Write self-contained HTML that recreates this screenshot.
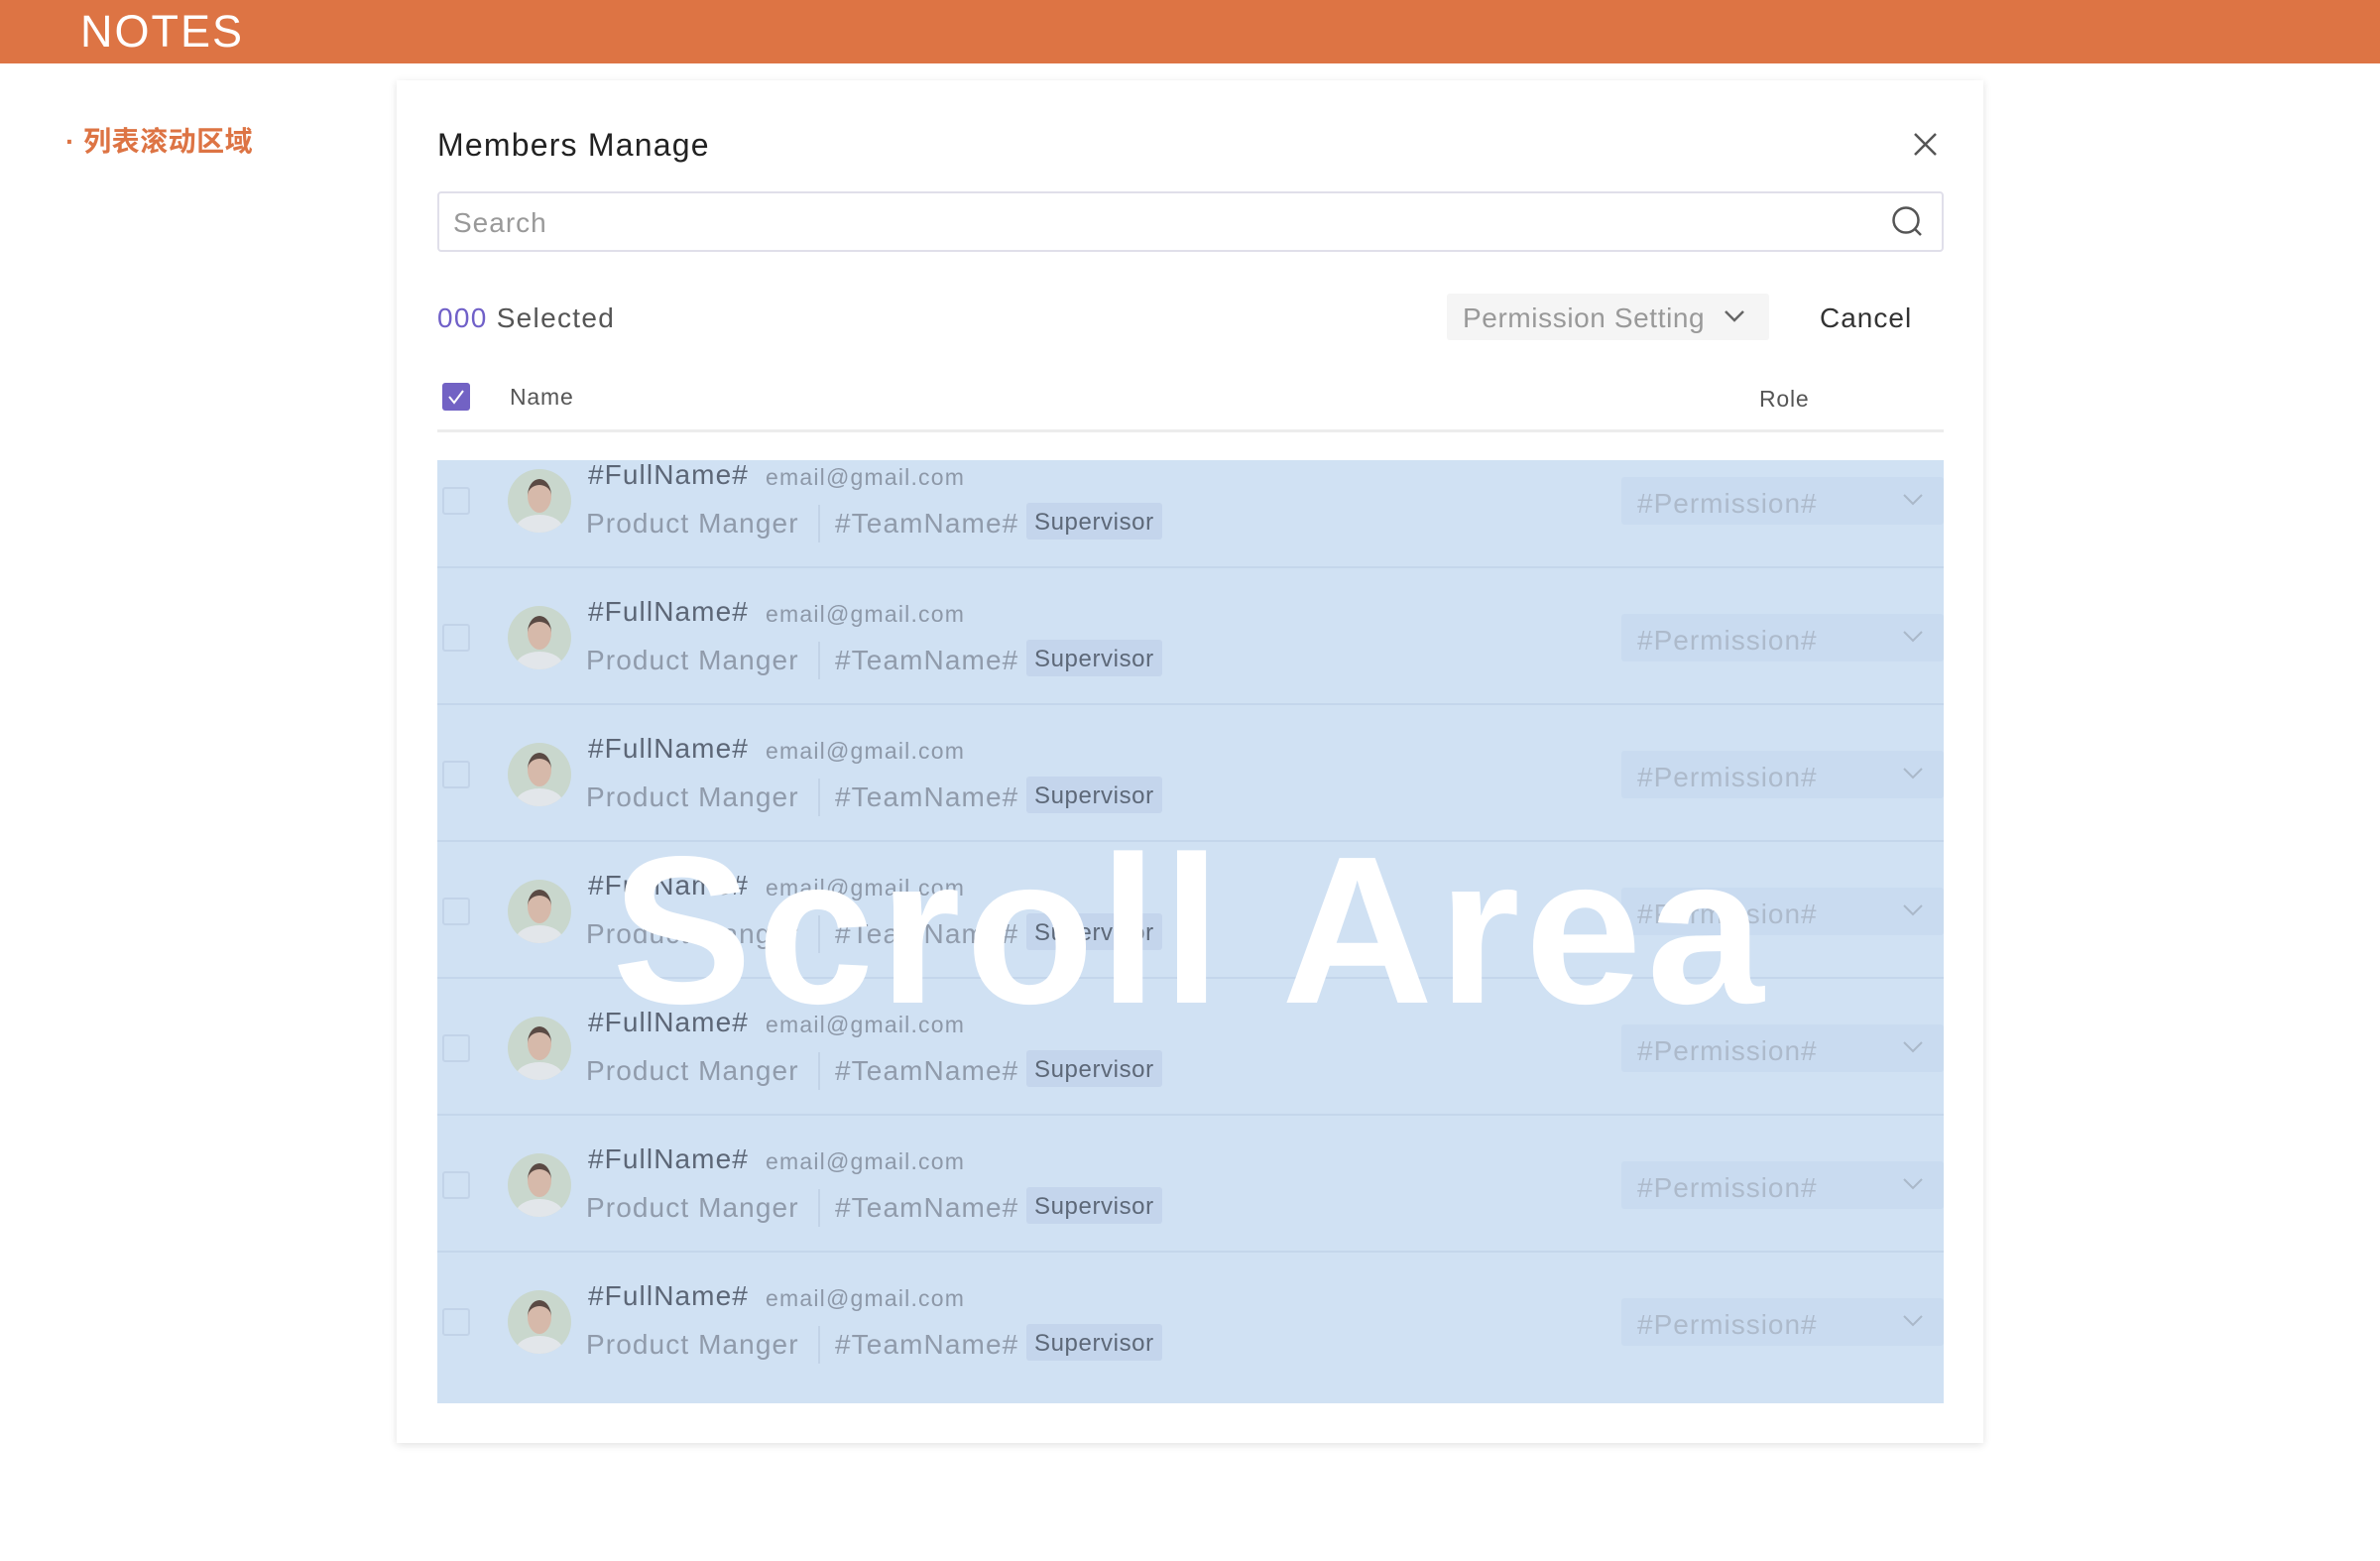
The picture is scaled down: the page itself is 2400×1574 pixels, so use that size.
<!DOCTYPE html>
<html><head><meta charset="utf-8"><style>
*{margin:0;padding:0;box-sizing:border-box}
body{width:2400px;height:1574px;position:relative;background:#fff;font-family:"Liberation Sans","Noto Sans CJK SC",sans-serif;overflow:hidden}
.a{position:absolute;white-space:nowrap}
.hdr{left:0;top:0;width:2400px;height:64px;background:#dd7444}
.modal{left:400px;top:81px;width:1600px;height:1374px;background:#fff;box-shadow:0 2px 8px rgba(0,0,0,0.12)}
.scroll{left:441px;top:464px;width:1519px;height:951px;background:#d0e1f3;overflow:hidden}
.row{position:absolute;left:0;width:1519px;height:138px;border-bottom:2px solid #c4d6eb}
.cb{position:absolute;left:5px;top:56px;width:28px;height:28px;border:2px solid #c2d3e8;border-radius:3px;background:#d0e1f3}
.av{position:absolute;left:71px;top:38px;width:64px;height:64px;border-radius:50%;background:#c9d7cd;overflow:hidden}
.fn{position:absolute;left:152px;top:28px;font-size:28px;color:#5c6676;letter-spacing:1.1px}
.em{position:absolute;left:331px;top:33px;font-size:23px;color:#8d98a8;letter-spacing:1.2px}
.pm{position:absolute;left:150px;top:77px;font-size:28px;color:#909bab;letter-spacing:1.1px}
.dv{position:absolute;left:384px;top:74px;width:2px;height:38px;background:#c2d3e7}
.tn{position:absolute;left:401px;top:77px;font-size:28px;color:#909bab;letter-spacing:1.1px}
.tag{position:absolute;left:594px;top:72px;width:137px;height:37px;background:#c4d5ec;border-radius:3px;font-size:24px;color:#5d6878;padding:6px 0 0 8px;letter-spacing:0.6px}
.sel{position:absolute;left:1194px;top:46px;width:325px;height:48px;background:#c9dbf0;border-radius:3px}
.sel span{position:absolute;left:16px;top:11px;font-size:28px;color:#adbacb;letter-spacing:1px}
.sel svg{position:absolute;left:283px;top:16px}
</style></head><body>
<div class="a hdr"></div>
<div class="a" style="left:81px;top:6px;font-size:45px;color:#fff;letter-spacing:2px">NOTES</div>
<div class="a" style="left:66px;top:121px;font-size:28px;color:#dd7444;font-weight:bold;letter-spacing:0.5px">· 列表滚动区域</div>
<div class="a modal"></div>
<div class="a" style="left:441px;top:128px;font-size:32px;color:#222;letter-spacing:1.2px">Members Manage</div>
<svg class="a" style="left:1930px;top:134px" width="23" height="23" viewBox="0 0 23 23"><path d="M1 1L22 22M22 1L1 22" stroke="#555" stroke-width="2.5"/></svg>
<div class="a" style="left:441px;top:193px;width:1519px;height:61px;border:2px solid #e0dfea;border-radius:4px"></div>
<div class="a" style="left:457px;top:209px;font-size:28px;color:#999;letter-spacing:1px">Search</div>
<svg class="a" style="left:1906px;top:207px" width="34" height="34" viewBox="0 0 34 34"><circle cx="16" cy="15" r="12.5" fill="none" stroke="#555" stroke-width="2.5"/><path d="M25 24L31 30" stroke="#555" stroke-width="2.5"/></svg>
<div class="a" style="left:441px;top:305px;font-size:28px;color:#555;letter-spacing:1.3px"><span style="color:#7060c8">000</span> Selected</div>
<div class="a" style="left:1459px;top:296px;width:325px;height:47px;background:#f5f5f5;border-radius:3px"></div>
<div class="a" style="left:1475px;top:305px;font-size:28px;color:#999;letter-spacing:0.6px">Permission Setting</div>
<svg class="a" style="left:1738px;top:312px" width="22" height="14" viewBox="0 0 22 14"><path d="M2 2L11 11L20 2" fill="none" stroke="#666" stroke-width="2.5"/></svg>
<div class="a" style="left:1835px;top:305px;font-size:28px;color:#333;letter-spacing:1px">Cancel</div>
<div class="a" style="left:446px;top:386px;width:28px;height:28px;background:#7262c4;border-radius:3px"></div>
<svg class="a" style="left:446px;top:386px" width="28" height="28" viewBox="0 0 28 28"><path d="M7 14L12 20L21 8" fill="none" stroke="#fff" stroke-width="2"/></svg>
<div class="a" style="left:514px;top:387px;font-size:23px;color:#555;letter-spacing:0.8px">Name</div>
<div class="a" style="left:1774px;top:389px;font-size:23px;color:#555;letter-spacing:0.8px">Role</div>
<div class="a" style="left:441px;top:433px;width:1519px;height:3px;background:#ececec"></div>
<div class="a scroll">
<div class="row" style="top:-29px"><div class="cb"></div><div class="av"><div style="position:absolute;left:20px;top:10px;width:24px;height:34px;border-radius:50%;background:#d6b9aa;border-top:6px solid #5a4a44"></div><div style="position:absolute;left:8px;top:46px;width:48px;height:30px;border-radius:50%;background:#e2e6ea"></div></div><div class="fn">#FullName#</div><div class="em">email@gmail.com</div><div class="pm">Product Manger</div><div class="dv"></div><div class="tn">#TeamName#</div><div class="tag">Supervisor</div><div class="sel"><span>#Permission#</span><svg width="22" height="14" viewBox="0 0 22 14"><path d="M2 2L11 11L20 2" fill="none" stroke="#aab8c9" stroke-width="2"/></svg></div></div>
<div class="row" style="top:109px"><div class="cb"></div><div class="av"><div style="position:absolute;left:20px;top:10px;width:24px;height:34px;border-radius:50%;background:#d6b9aa;border-top:6px solid #5a4a44"></div><div style="position:absolute;left:8px;top:46px;width:48px;height:30px;border-radius:50%;background:#e2e6ea"></div></div><div class="fn">#FullName#</div><div class="em">email@gmail.com</div><div class="pm">Product Manger</div><div class="dv"></div><div class="tn">#TeamName#</div><div class="tag">Supervisor</div><div class="sel"><span>#Permission#</span><svg width="22" height="14" viewBox="0 0 22 14"><path d="M2 2L11 11L20 2" fill="none" stroke="#aab8c9" stroke-width="2"/></svg></div></div>
<div class="row" style="top:247px"><div class="cb"></div><div class="av"><div style="position:absolute;left:20px;top:10px;width:24px;height:34px;border-radius:50%;background:#d6b9aa;border-top:6px solid #5a4a44"></div><div style="position:absolute;left:8px;top:46px;width:48px;height:30px;border-radius:50%;background:#e2e6ea"></div></div><div class="fn">#FullName#</div><div class="em">email@gmail.com</div><div class="pm">Product Manger</div><div class="dv"></div><div class="tn">#TeamName#</div><div class="tag">Supervisor</div><div class="sel"><span>#Permission#</span><svg width="22" height="14" viewBox="0 0 22 14"><path d="M2 2L11 11L20 2" fill="none" stroke="#aab8c9" stroke-width="2"/></svg></div></div>
<div class="row" style="top:385px"><div class="cb"></div><div class="av"><div style="position:absolute;left:20px;top:10px;width:24px;height:34px;border-radius:50%;background:#d6b9aa;border-top:6px solid #5a4a44"></div><div style="position:absolute;left:8px;top:46px;width:48px;height:30px;border-radius:50%;background:#e2e6ea"></div></div><div class="fn">#FullName#</div><div class="em">email@gmail.com</div><div class="pm">Product Manger</div><div class="dv"></div><div class="tn">#TeamName#</div><div class="tag">Supervisor</div><div class="sel"><span>#Permission#</span><svg width="22" height="14" viewBox="0 0 22 14"><path d="M2 2L11 11L20 2" fill="none" stroke="#aab8c9" stroke-width="2"/></svg></div></div>
<div class="row" style="top:523px"><div class="cb"></div><div class="av"><div style="position:absolute;left:20px;top:10px;width:24px;height:34px;border-radius:50%;background:#d6b9aa;border-top:6px solid #5a4a44"></div><div style="position:absolute;left:8px;top:46px;width:48px;height:30px;border-radius:50%;background:#e2e6ea"></div></div><div class="fn">#FullName#</div><div class="em">email@gmail.com</div><div class="pm">Product Manger</div><div class="dv"></div><div class="tn">#TeamName#</div><div class="tag">Supervisor</div><div class="sel"><span>#Permission#</span><svg width="22" height="14" viewBox="0 0 22 14"><path d="M2 2L11 11L20 2" fill="none" stroke="#aab8c9" stroke-width="2"/></svg></div></div>
<div class="row" style="top:661px"><div class="cb"></div><div class="av"><div style="position:absolute;left:20px;top:10px;width:24px;height:34px;border-radius:50%;background:#d6b9aa;border-top:6px solid #5a4a44"></div><div style="position:absolute;left:8px;top:46px;width:48px;height:30px;border-radius:50%;background:#e2e6ea"></div></div><div class="fn">#FullName#</div><div class="em">email@gmail.com</div><div class="pm">Product Manger</div><div class="dv"></div><div class="tn">#TeamName#</div><div class="tag">Supervisor</div><div class="sel"><span>#Permission#</span><svg width="22" height="14" viewBox="0 0 22 14"><path d="M2 2L11 11L20 2" fill="none" stroke="#aab8c9" stroke-width="2"/></svg></div></div>
<div class="row" style="top:799px;border-bottom:none"><div class="cb"></div><div class="av"><div style="position:absolute;left:20px;top:10px;width:24px;height:34px;border-radius:50%;background:#d6b9aa;border-top:6px solid #5a4a44"></div><div style="position:absolute;left:8px;top:46px;width:48px;height:30px;border-radius:50%;background:#e2e6ea"></div></div><div class="fn">#FullName#</div><div class="em">email@gmail.com</div><div class="pm">Product Manger</div><div class="dv"></div><div class="tn">#TeamName#</div><div class="tag">Supervisor</div><div class="sel"><span>#Permission#</span><svg width="22" height="14" viewBox="0 0 22 14"><path d="M2 2L11 11L20 2" fill="none" stroke="#aab8c9" stroke-width="2"/></svg></div></div>
</div>
<div class="a" style="left:617px;top:818px;font-size:212px;line-height:240px;font-weight:bold;color:#fff;letter-spacing:5px">Scroll Area</div>
</body></html>
